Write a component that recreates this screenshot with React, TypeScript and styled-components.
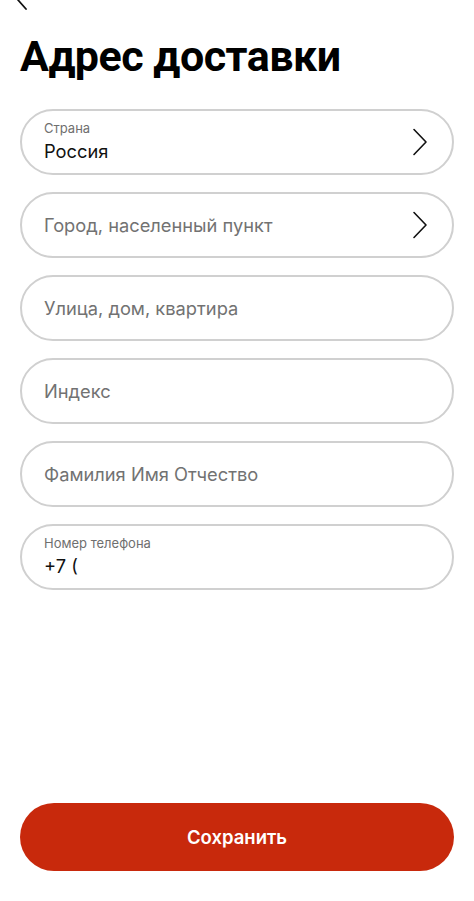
import React from "react";
import styled, { createGlobalStyle } from "styled-components";

const GlobalStyle = createGlobalStyle`
  html, body {
    margin: 0;
    padding: 0;
    background: #ffffff;
  }
  body {
    font-family: Inter, "Noto Sans", "Liberation Sans", sans-serif;
    -webkit-font-smoothing: antialiased;
  }
`;

const Page = styled.div`
  box-sizing: border-box;
  width: 474px;
  min-height: 901px;
  padding: 0 20px 30px;
  display: flex;
  flex-direction: column;
`;

const TopBar = styled.div`
  height: 10px;
  display: flex;
  align-items: flex-start;
`;

const BackIcon = styled.svg`
  width: 14px;
  height: 10px;
  margin-left: -4px;
  display: block;
`;

const Title = styled.h1`
  margin: 20px 0 27px;
  font-family: Roboto, Inter, "Liberation Sans", sans-serif;
  font-size: 43px;
  line-height: 52px;
  font-weight: 700;
  color: #000;
  letter-spacing: -0.5px;
`;

const Form = styled.div`
  display: flex;
  flex-direction: column;
  gap: 17px;
`;

const Field = styled.div`
  box-sizing: border-box;
  height: 66px;
  border: 2px solid #d0d0d0;
  border-radius: 33px;
  padding: 0 24px 0 22px;
  display: flex;
  align-items: center;
`;

const FieldBody = styled.div`
  flex: 1;
  display: flex;
  flex-direction: column;
`;

const Label = styled.span`
  font-size: 13px;
  line-height: 16px;
  color: #6f6f6f;
  margin-top: -2px;
`;

const Value = styled.span<{ $placeholder?: boolean }>`
  font-size: 18.3px;
  line-height: 24px;
  color: ${(p) => (p.$placeholder ? "#727272" : "#111111")};
  margin-top: ${(p) => (p.$placeholder ? "0" : "3px")};
`;

const Chevron = styled.svg`
  width: 16px;
  height: 28px;
  flex-shrink: 0;
`;

const SaveButton = styled.button`
  margin-top: auto;
  height: 68px;
  width: 100%;
  border: none;
  border-radius: 34px;
  background: #c8290c;
  color: #fff;
  font-family: inherit;
  font-size: 18.5px;
  font-weight: 600;
  cursor: pointer;
`;

interface FieldProps {
  label?: string;
  value?: string;
  placeholder?: string;
  arrow?: boolean;
}

const ChevronIcon = () => (
  <Chevron viewBox="0 0 16 28" fill="none">
    <path d="M2 1.5 L14 14 L2 26.5" stroke="#111" strokeWidth="1.6" strokeLinecap="round" strokeLinejoin="round" />
  </Chevron>
);

const InputField = ({ label, value, placeholder, arrow }: FieldProps) => (
  <Field>
    <FieldBody>
      {label && <Label>{label}</Label>}
      {value ? <Value>{value}</Value> : <Value $placeholder>{placeholder}</Value>}
    </FieldBody>
    {arrow && <ChevronIcon />}
  </Field>
);

const App = () => (
  <>
    <GlobalStyle />
    <Page>
      <TopBar>
        <BackIcon viewBox="0 0 14 10" fill="none">
          <path d="M10 -9 L2 0 L10 9" stroke="#111" strokeWidth="1.8" strokeLinecap="round" strokeLinejoin="round" />
        </BackIcon>
      </TopBar>
      <Title>Адрес доставки</Title>
      <Form>
        <InputField label="Страна" value="Россия" arrow />
        <InputField placeholder="Город, населенный пункт" arrow />
        <InputField placeholder="Улица, дом, квартира" />
        <InputField placeholder="Индекс" />
        <InputField placeholder="Фамилия Имя Отчество" />
        <InputField label="Номер телефона" value="+7 (" />
      </Form>
      <SaveButton>Сохранить</SaveButton>
    </Page>
  </>
);

export default App;
